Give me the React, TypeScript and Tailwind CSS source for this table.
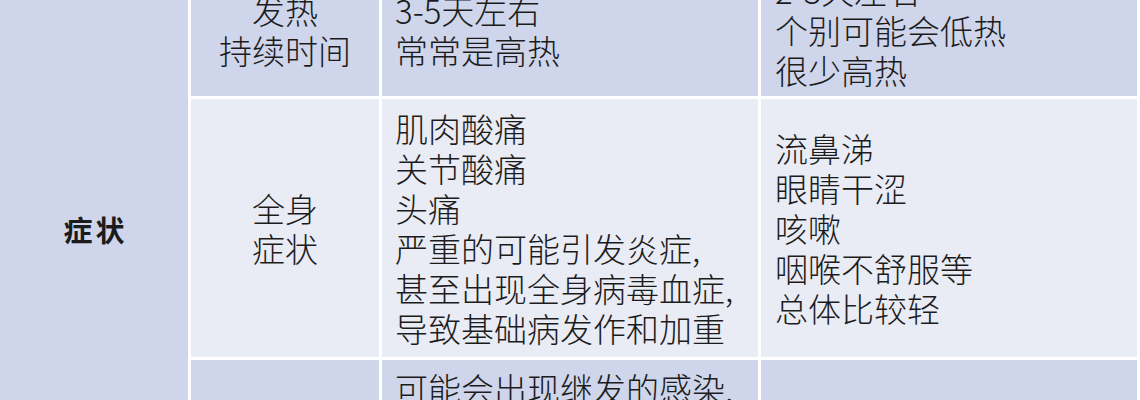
const rows = [
    {
        label: ['发热', '持续时间'],
        flu: ['3-5天左右', '常常是高热'],
        cold: ['2-3天左右', '个别可能会低热', '很少高热'],
        tone: 'bg-[#cfd5ea]',
    },
    {
        label: ['全身', '症状'],
        flu: ['肌肉酸痛', '关节酸痛', '头痛', '严重的可能引发炎症,', '甚至出现全身病毒血症,', '导致基础病发作和加重'],
        cold: ['流鼻涕', '眼睛干涩', '咳嗽', '咽喉不舒服等', '总体比较轻'],
        tone: 'bg-[#e9ebf5]',
    },
    {
        label: ['并发症'],
        flu: ['可能会出现继发的感染,', '如肺炎、心肌炎等', '严重的可能致死'],
        cold: ['很少出现并发症'],
        tone: 'bg-[#cfd5ea]',
    },
]

export default function App() {
    return (
        <div className="w-[1140px] h-[400px] overflow-hidden bg-white font-['Noto_Sans_CJK_SC','Noto_Sans',sans-serif] text-[#1c1c1c]">
            <div className="-mt-[36px] grid grid-cols-[188px_188px_376px_376px] grid-rows-[132px_258px_136px] gap-[3px] pr-[3px] bg-white">
                {/* merged category cell */}
                <div className="row-span-3 bg-[#cfd5ea] flex items-center justify-center">
                    <span className="text-[29px] font-bold tracking-[3px] pl-[3px]">症状</span>
                </div>

                {rows.map((row, i) => (
                    <RowCells key={i} {...row} />
                ))}
            </div>
        </div>
    )
}

function RowCells({ label, flu, cold, tone }: { label: string[]; flu: string[]; cold: string[]; tone: string }) {
    return (
        <>
            <div className={`${tone} flex flex-col items-center justify-center text-[33px] font-light leading-[40px] text-center`}>
                {label.map(t => <span key={t}>{t}</span>)}
            </div>
            <div className={`${tone} flex flex-col justify-center pl-[13px] text-[33px] font-light leading-[40px] whitespace-nowrap`}>
                {flu.map(t => <span key={t}>{t}</span>)}
            </div>
            <div className={`${tone} flex flex-col justify-center pl-[14px] text-[33px] font-light leading-[40px] whitespace-nowrap`}>
                {cold.map(t => <span key={t}>{t}</span>)}
            </div>
        </>
    )
}
